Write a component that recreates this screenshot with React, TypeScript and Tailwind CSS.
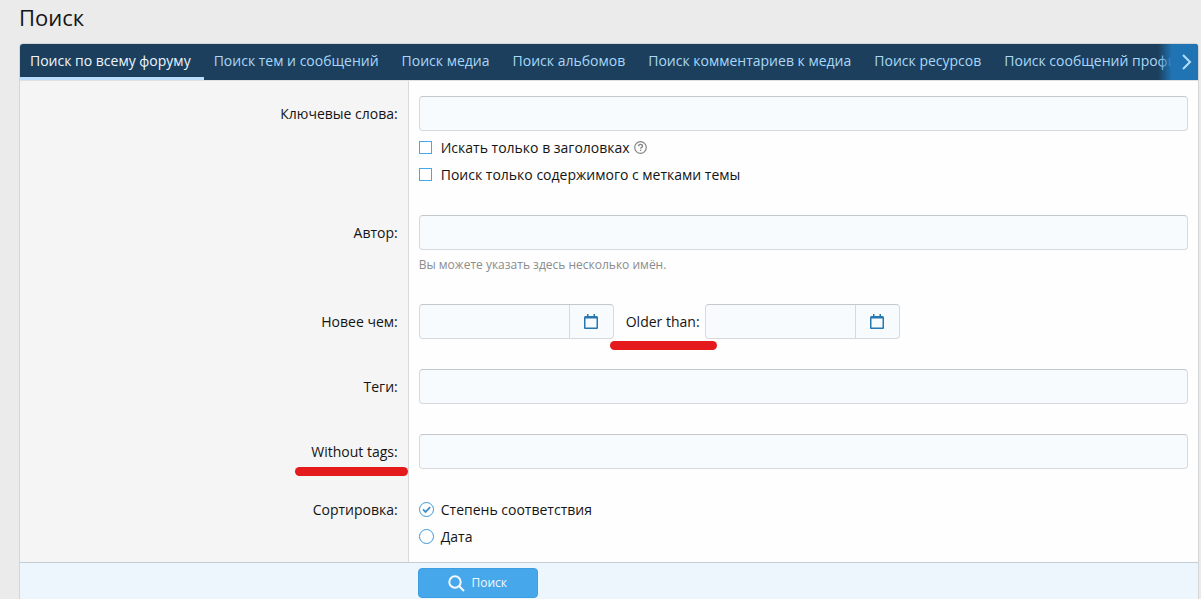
import React from "react";
import clsx from "clsx";

const tabs = [
  "Поиск по всему форуму",
  "Поиск тем и сообщений",
  "Поиск медиа",
  "Поиск альбомов",
  "Поиск комментариев к медиа",
  "Поиск ресурсов",
  "Поиск сообщений профилей",
];

const inputClass =
  "block h-[35px] w-full rounded border border-[#d6dade] border-t-[#c3c8cc] bg-[#f7fbfe] px-2 outline-none focus:bg-white";

function Marker({ className }: { className: string }) {
  return (
    <span
      aria-hidden="true"
      className={clsx("absolute h-[9px] rounded-full bg-[#e51a1c]", className)}
    />
  );
}

function FormRow({
  label,
  htmlFor,
  flush,
  marked,
  children,
}: {
  label: string;
  htmlFor?: string;
  flush?: boolean;
  marked?: boolean;
  children: React.ReactNode;
}) {
  const text = (
    <>
      {label}
      {marked && <Marker className="-left-4 -right-2.5 top-[26px]" />}
    </>
  );
  return (
    <div className="flex">
      <div
        className={clsx(
          "w-[33%] shrink-0 border-r border-[#d9d9d9] bg-[#f5f5f5] px-2.5 pb-[15px] text-right",
          flush ? "pt-[15px]" : "pt-[22px]"
        )}
      >
        {htmlFor ? (
          <label htmlFor={htmlFor} className="relative inline-block">
            {text}
          </label>
        ) : (
          <span id="order-label">{text}</span>
        )}
      </div>
      <div className="min-w-0 flex-1 px-2.5 py-[15px]">{children}</div>
    </div>
  );
}

function Checkbox({ label, children }: { label: string; children?: React.ReactNode }) {
  return (
    <div className="flex items-center">
      <label className="flex items-center gap-[9px]">
        <input
          type="checkbox"
          className="size-[13px] appearance-none border border-[#47a7eb] bg-white checked:bg-[#47a7eb]"
        />
        {label}
      </label>
      {children}
    </div>
  );
}

function Radio({ label, defaultChecked }: { label: string; defaultChecked?: boolean }) {
  return (
    <label className="flex items-center gap-[7px]">
      <span className="relative flex size-[15px]">
        <input
          type="radio"
          name="order"
          defaultChecked={defaultChecked}
          className="peer size-[15px] appearance-none rounded-full border border-[#3d97d8] bg-white"
        />
        <svg
          viewBox="0 0 15 15"
          className="pointer-events-none absolute inset-0 hidden size-[15px] peer-checked:block"
          fill="none"
          stroke="#3d8fcb"
          strokeWidth="1.8"
        >
          <path d="M4 7.4l2.5 2.5L11.2 5.2" />
        </svg>
      </span>
      {label}
    </label>
  );
}

function DateInput({ id }: { id: string }) {
  return (
    <div className="flex h-[35px] w-[195px] overflow-hidden rounded border border-[#d6dade] border-t-[#c3c8cc] bg-[#f7fbfe]">
      <input id={id} type="text" className="min-w-0 flex-1 px-2 outline-none" />
      <button
        type="button"
        aria-label="Календарь"
        className="flex w-11 items-center justify-center border-l border-[#d6dade]"
      >
        <svg width="14" height="16" viewBox="0 0 14 16" fill="#2577b1">
          <path
            fillRule="evenodd"
            d="M3 0h1.500v2h5V0H11v2h1.500A1.500 1.500 0 0 1 14 3.500V14a1 1 0 0 1-1 1H1a1 1 0 0 1-1-1V3.500A1.500 1.500 0 0 1 1.500 2H3zM1.500 4.500v9h11v-9z"
          />
        </svg>
      </button>
    </div>
  );
}

export default function App() {
  return (
    <div className="h-screen overflow-hidden bg-[#ebebeb] pl-[19px] pr-0.5 font-['Open_Sans','Noto_Sans',sans-serif] text-sm leading-[21px] text-[#141414]">
      <h1 className="pb-2.5 pt-px text-[22px] leading-8">Поиск</h1>

      <div className="overflow-hidden rounded border border-[#d3d5d7] bg-[#fefefe]">
        {/* tabs */}
        <nav className="relative flex h-9 overflow-hidden bg-[#1c3f5d] text-[#a9d7f7]">
          {tabs.map((tab, i) => (
            <a
              key={tab}
              href="#"
              className={clsx(
                "shrink-0 whitespace-nowrap border-b-[3px] pl-2.5 pr-[13px] pt-1.5",
                i === 0 ? "border-[#b9dffa] text-[#edf6fd]" : "border-transparent"
              )}
            >
              {tab}
            </a>
          ))}
          <button
            type="button"
            aria-label="Далее"
            className="absolute inset-y-0 right-0 flex w-10 items-center justify-end bg-linear-to-r from-transparent to-[#2174b4] to-35% pr-1.5"
          >
            <svg width="10" height="16" viewBox="0 0 10 16" fill="none" stroke="#b5def9" strokeWidth="2">
              <path d="M1 1l7 7-7 7" />
            </svg>
          </button>
        </nav>

        <form className="border-t border-[#dfe1e3]">
          <FormRow label="Ключевые слова:" htmlFor="keywords">
            <input id="keywords" type="text" className={inputClass} />
            <div className="mt-1.5 flex flex-col gap-1.5">
              <Checkbox label="Искать только в заголовках">
                <svg
                  width="13"
                  height="13"
                  viewBox="0 0 13 13"
                  fill="none"
                  stroke="#858585"
                  className="ml-1"
                >
                  <circle cx="6.5" cy="6.5" r="5.800" strokeWidth="1.200" />
                  <path d="M4.600 5.200c0-2.400 3.900-2.400 3.900 0 0 1.300-1.900 1.300-1.900 2.500M6.600 8.700v1.400" strokeWidth="1.400" />
                </svg>
              </Checkbox>
              <Checkbox label="Поиск только содержимого с метками темы" />
            </div>
          </FormRow>

          <FormRow label="Автор:" htmlFor="author">
            <input id="author" type="text" className={inputClass} />
            <p className="mt-1.5 text-xs leading-[18px] text-[#8c8c8c]">
              Вы можете указать здесь несколько имён.
            </p>
          </FormRow>

          <FormRow label="Новее чем:" htmlFor="newer">
            <div className="flex items-center">
              <DateInput id="newer" />
              <label htmlFor="older" className="relative pl-3 pr-[5px]">
                Older than:
                <Marker className="-left-1 -right-3 top-[30px]" />
              </label>
              <DateInput id="older" />
            </div>
          </FormRow>

          <FormRow label="Теги:" htmlFor="tags">
            <input id="tags" type="text" className={inputClass} />
          </FormRow>

          <FormRow label="Without tags:" htmlFor="without-tags" marked>
            <input id="without-tags" type="text" className={inputClass} />
          </FormRow>

          <FormRow label="Сортировка:" flush>
            <div role="radiogroup" aria-labelledby="order-label" className="flex flex-col gap-1.5">
              <Radio label="Степень соответствия" defaultChecked />
              <Radio label="Дата" />
            </div>
          </FormRow>

          {/* submit */}
          <div className="border-t border-[#c5cdd4] bg-[#edf5fd] py-[5px] pl-[calc(33%+9px)]">
            <button
              type="submit"
              className="flex h-[30px] w-[120px] items-center justify-center gap-1.5 rounded-sm border border-[#3d9ee2] bg-[#47a7eb] text-xs text-[#f3faff]"
            >
              <svg width="17" height="17" viewBox="0 0 17 17" fill="none" stroke="currentColor" strokeWidth="2">
                <circle cx="7" cy="7" r="5.700" />
                <path d="M11 11l5 5" />
              </svg>
              Поиск
            </button>
          </div>
        </form>
      </div>
    </div>
  );
}
